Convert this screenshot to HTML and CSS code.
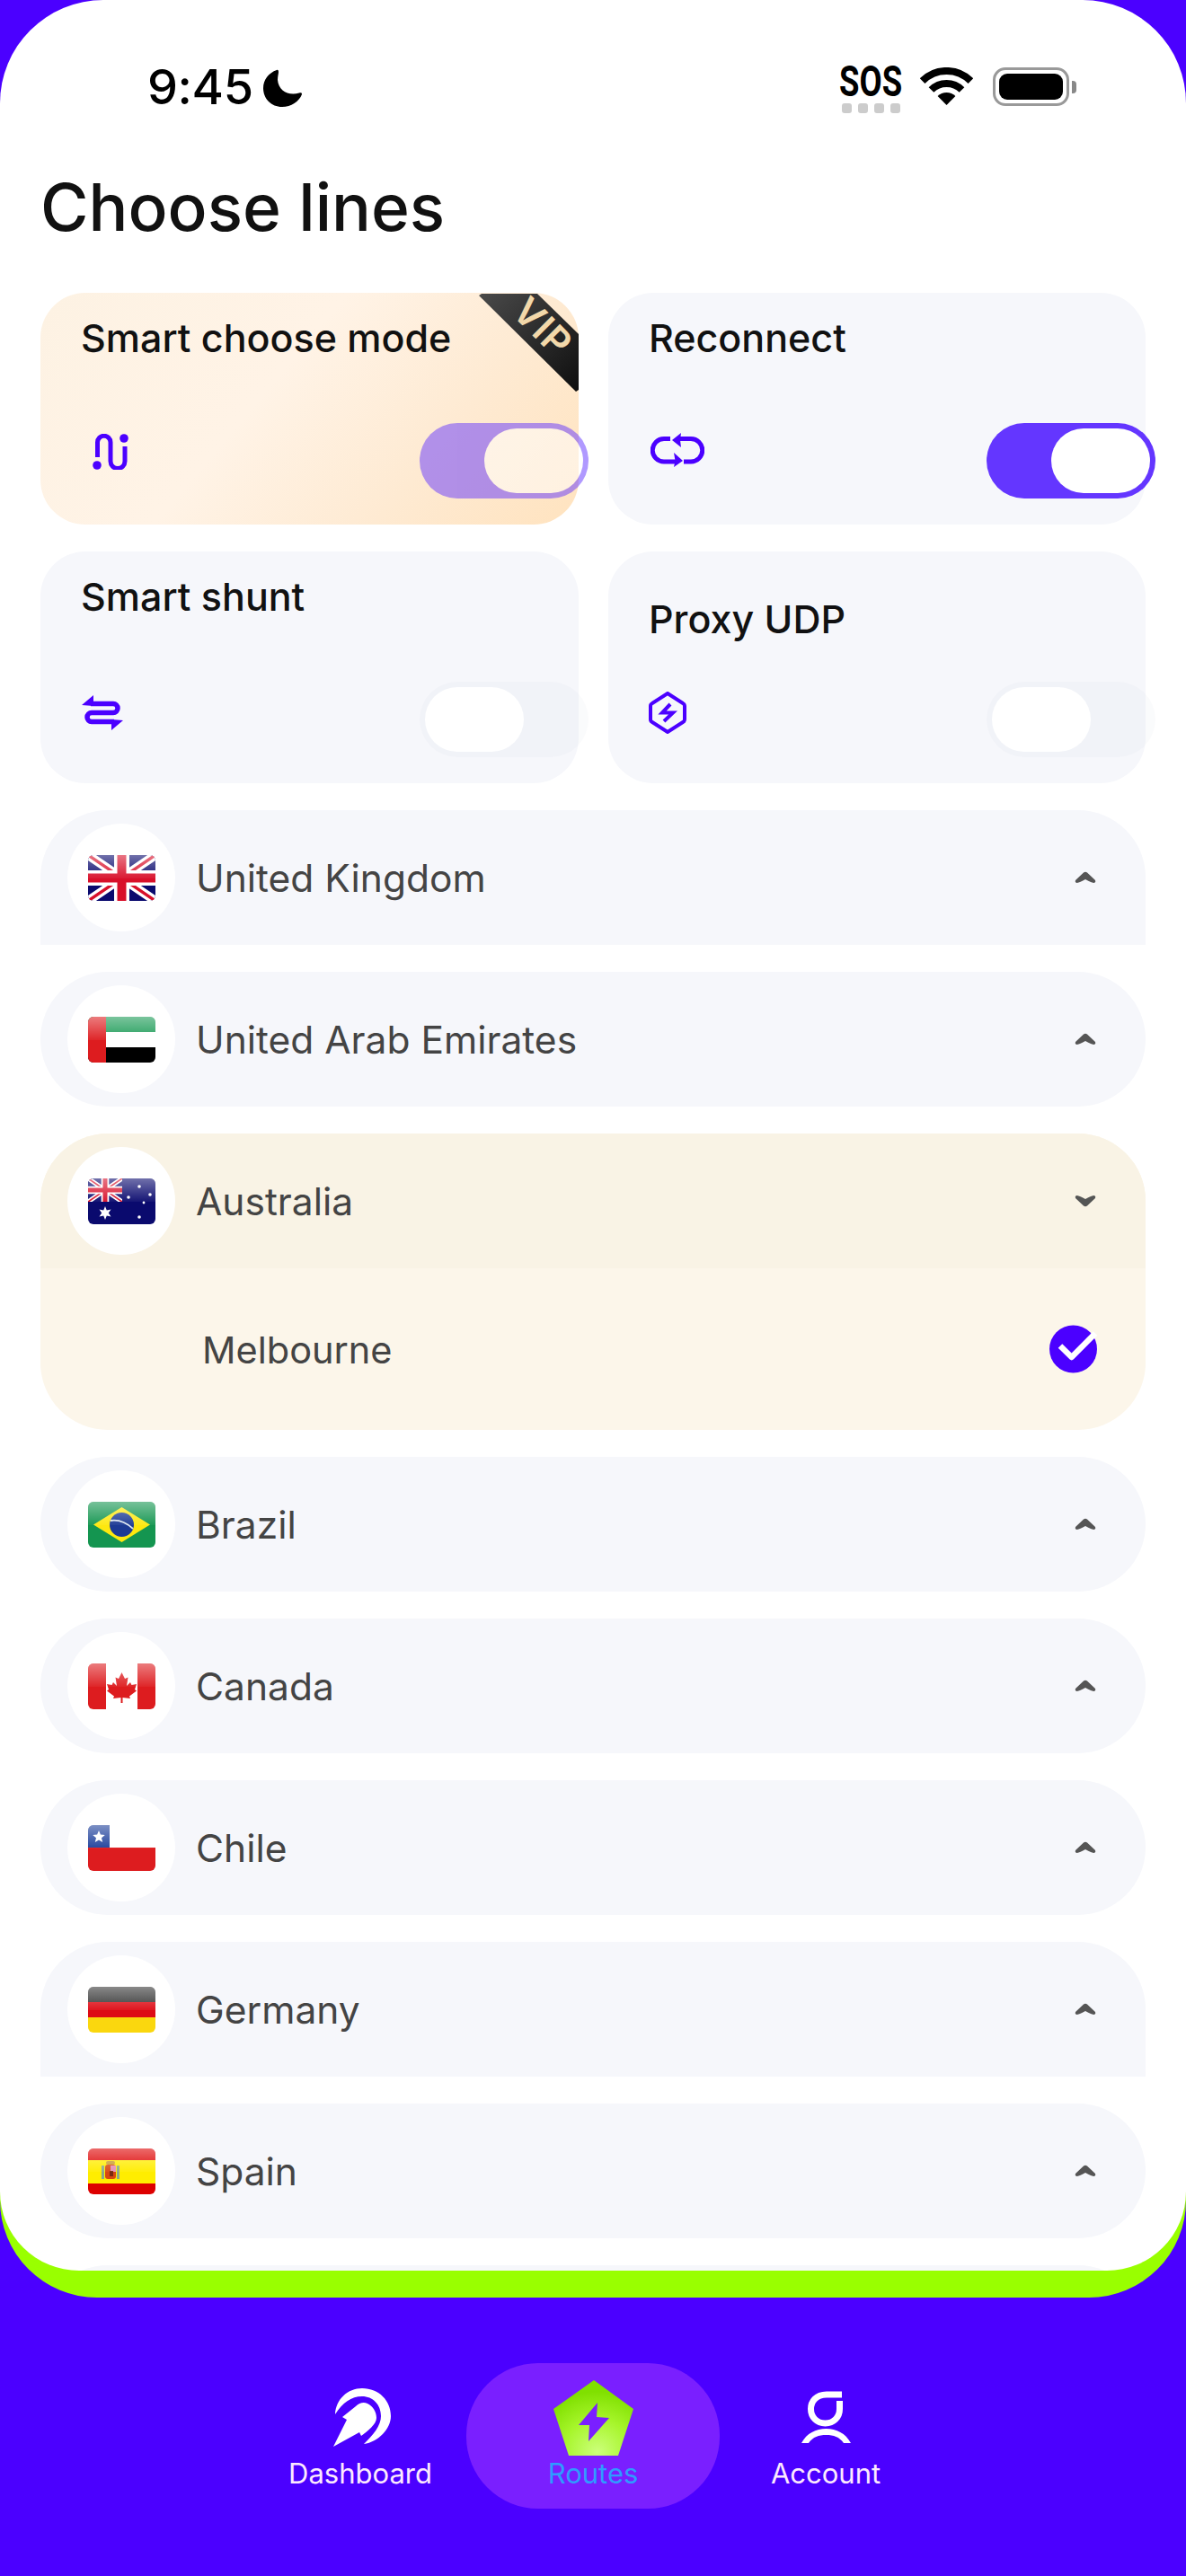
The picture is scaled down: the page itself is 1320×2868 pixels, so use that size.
FILE: index.html
```html
<!DOCTYPE html>
<html lang="en">
<head>
  <meta charset="UTF-8">
  <title>Choose lines</title>
  <link rel="stylesheet" href="styles.css">
</head>
<body>

<svg class="defs" width="0" height="0">
  <symbol id="uk" viewBox="0 0 75 51" preserveAspectRatio="none">
    <rect width="75" height="51" fill="#0a0a6e"/>
    <path d="M0 0L75 51M75 0L0 51" stroke="#fff" stroke-width="10"/>
    <path d="M0 0L75 51M75 0L0 51" stroke="#d8102a" stroke-width="3.5"/>
    <path d="M37.5 0V51M0 25.5H75" stroke="#fff" stroke-width="17"/>
    <path d="M37.5 0V51M0 25.5H75" stroke="#d8102a" stroke-width="10"/>
  </symbol>
  <symbol id="chev" viewBox="0 0 24 14">
    <path d="M2 1Q5 1 12 5Q19 1 22 1Q24 2 23 4L14 12.5Q12 14 10 12.5L1 4Q0 2 2 1Z"/>
  </symbol>
</svg>

<div class="sheet-back">
<div class="sheet">
  <div class="status">
    <span class="time">9:45</span>
    <svg class="moon" width="43" height="42" viewBox="0 0 43 42"><path d="M15 1C6 4 0 12 0 21C0 33 9 42 21 42C31 42 40 36 43 28C43 26 42 26 40 26.5C28 30 17 24 16 12C16 8 17 5 17 3C17 1 16 .5 15 1Z"/></svg>
    <div class="status-right">
      <div class="sos">
        <span class="sos-text">SOS</span>
        <div class="sos-dots"><i></i><i></i><i></i><i></i></div>
      </div>
      <svg class="wifi" width="59" height="42" viewBox="0 0 59 42">
        <path d="M2.6 15.1A38 38 0 0 1 56.4 15.1" fill="none" stroke="#000" stroke-width="8"/>
        <path d="M12.5 25A24 24 0 0 1 46.5 25" fill="none" stroke="#000" stroke-width="8"/>
        <path d="M29.5 42L19.6 32.1A14 14 0 0 1 39.4 32.1Z"/>
      </svg>
      <div class="battery"><div class="battery-body"><div class="battery-fill"></div></div><div class="battery-tip"></div></div>
    </div>
  </div>

  <h1 class="page-title">Choose lines</h1>

  <div class="cards">
    <div class="card card-vip">
      <div class="ribbon"><span>VIP</span></div>
      <div class="card-title">Smart choose mode</div>
      <div class="card-foot">
        <svg class="ico ico-route" width="40" height="40" viewBox="0 0 40 40">
          <path d="M5.5 26V9.5A7.25 7.25 0 0 1 20 9.5V30.5A8 8 0 0 0 36 30.5V14" fill="none" stroke="#4b00ff" stroke-width="5"/>
          <circle cx="5" cy="35" r="4.8" fill="#4b00ff"/><circle cx="35" cy="5" r="4.8" fill="#4b00ff"/>
        </svg>
        <div class="toggle on faded"><i></i></div>
      </div>
    </div>
    <div class="card">
      <div class="card-title">Reconnect</div>
      <div class="card-foot">
        <svg class="ico ico-loop" width="60" height="38" viewBox="0 0 60 38">
          <path d="M22 6.5H15A12.75 12.75 0 0 0 15 32H28M31 6.5H45A12.75 12.75 0 0 1 45 32H37" fill="none" stroke="#4b00ff" stroke-width="5"/>
          <path d="M24 8L34 0L33 8L34 16Z M36 31L26 22L27.5 31L26 38Z" fill="#4b00ff"/>
        </svg>
        <div class="toggle on"><i></i></div>
      </div>
    </div>
    <div class="card">
      <div class="card-title">Smart shunt</div>
      <div class="card-foot">
        <svg class="ico ico-shunt" width="46" height="39" viewBox="0 0 46 39">
          <path d="M10 9.5H35A5 5 0 0 1 35 19.5H11A5 5 0 0 0 11 29.5H36" fill="none" stroke="#4b00ff" stroke-width="5.5"/>
          <path d="M0 11L13 0V12ZM46 28L33 39V27Z" fill="#4b00ff"/>
        </svg>
        <div class="toggle"><i></i></div>
      </div>
    </div>
    <div class="card">
      <div class="card-title title-low">Proxy UDP</div>
      <div class="card-foot">
        <svg class="ico ico-udp" width="42" height="47" viewBox="0 0 42 47">
          <path d="M21 2L38 13Q40 14 40 16V31Q40 33 38 34L21 45L4 34Q2 33 2 31V16Q2 14 4 13Z" fill="none" stroke="#4b00ff" stroke-width="4"/>
          <path d="M24 14L15 23.5H27L17 33" fill="none" stroke="#4b00ff" stroke-width="4"/>
        </svg>
        <div class="toggle"><i></i></div>
      </div>
    </div>
  </div>

  <div class="lines">
    <div class="row flat">
      <div class="flag-wrap"><div class="flag"><svg width="75" height="51"><use href="#uk"/></svg></div></div>
      <span class="name">United Kingdom</span>
      <svg class="chev up"><use href="#chev"/></svg>
    </div>

    <div class="row">
      <div class="flag-wrap"><div class="flag"><svg width="75" height="51" viewBox="0 0 75 51">
        <rect width="75" height="17" fill="#1a9a55"/><rect y="17" width="75" height="17" fill="#fff"/><rect y="34" width="75" height="17" fill="#000"/><rect width="20" height="51" fill="#dd1c1f"/>
      </svg></div></div>
      <span class="name">United Arab Emirates</span>
      <svg class="chev up"><use href="#chev"/></svg>
    </div>

    <div class="group">
      <div class="row open">
        <div class="flag-wrap"><div class="flag"><svg width="75" height="51" viewBox="0 0 75 51">
          <rect width="75" height="51" fill="#0a0a6e"/>
          <svg width="38" height="26" viewBox="0 0 75 51" preserveAspectRatio="none"><use href="#uk"/></svg>
          <polygon points="19,31 20.8,35.6 25.5,34.5 22.8,38.5 25.5,42.5 20.8,41.4 19,46 17.2,41.4 12.5,42.5 15.2,38.5 12.5,34.5 17.2,35.6" fill="#fff"/>
          <g fill="#fff"><circle cx="57" cy="9" r="1.8"/><circle cx="45" cy="21" r="1.8"/><circle cx="69" cy="18" r="1.8"/><circle cx="62" cy="27" r="1.4"/><circle cx="57" cy="43" r="1.8"/></g>
        </svg></div></div>
        <span class="name">Australia</span>
        <svg class="chev"><use href="#chev"/></svg>
      </div>
      <div class="sub-row">
        <span class="name sub-name">Melbourne</span>
        <svg class="check" width="56" height="54" viewBox="0 0 56 54">
          <circle cx="26.5" cy="27" r="26.5" fill="#4b00ff"/>
          <path d="M12 23.5L24.7 36L51 9.5" fill="none" stroke="#fff" stroke-width="6.5" stroke-linejoin="round"/>
        </svg>
      </div>
    </div>

    <div class="row">
      <div class="flag-wrap"><div class="flag"><svg width="75" height="51" viewBox="0 0 75 51">
        <rect width="75" height="51" fill="#149550"/>
        <polygon points="37.5,6 69,25.5 37.5,45 6,25.5" fill="#fde80f"/>
        <circle cx="37.5" cy="25.5" r="13.5" fill="#1c3a94"/>
        <path d="M25 21Q38 19 50 30" fill="none" stroke="#dfe8f0" stroke-width="1.8"/>
      </svg></div></div>
      <span class="name">Brazil</span>
      <svg class="chev up"><use href="#chev"/></svg>
    </div>

    <div class="row">
      <div class="flag-wrap"><div class="flag"><svg width="75" height="51" viewBox="0 0 75 51">
        <rect width="75" height="51" fill="#fff"/><rect width="20" height="51" fill="#dd1c1f"/><rect x="55" width="20" height="51" fill="#dd1c1f"/>
        <polygon points="37.5,10 41,17 44.5,15.5 43,25 47,21 48.5,24 54,23 52,29 54,30.5 46,36.5 47,39 38.5,38 38.5,44 36.5,44 36.5,38 28,39 29,36.5 21,30.5 23,29 21,23 26.5,24 28,21 32,25 30.5,15.5 34,17" fill="#dd1c1f"/>
      </svg></div></div>
      <span class="name">Canada</span>
      <svg class="chev up"><use href="#chev"/></svg>
    </div>

    <div class="row">
      <div class="flag-wrap"><div class="flag"><svg width="75" height="51" viewBox="0 0 75 51">
        <rect width="75" height="25" fill="#fff"/><rect y="25" width="75" height="26" fill="#dd1c1f"/><rect width="24" height="25" fill="#1d3f9a"/>
        <polygon points="12,6 13.9,10.6 18.8,11 15,14.2 16.2,19 12,16.4 7.8,19 9,14.2 5.2,11 10.1,10.6" fill="#fff"/>
      </svg></div></div>
      <span class="name">Chile</span>
      <svg class="chev up"><use href="#chev"/></svg>
    </div>

    <div class="row flat">
      <div class="flag-wrap"><div class="flag"><svg width="75" height="51" viewBox="0 0 75 51">
        <rect width="75" height="17" fill="#333"/><rect y="17" width="75" height="17" fill="#dd0b15"/><rect y="34" width="75" height="17" fill="#fad70e"/>
      </svg></div></div>
      <span class="name">Germany</span>
      <svg class="chev up"><use href="#chev"/></svg>
    </div>

    <div class="row">
      <div class="flag-wrap"><div class="flag"><svg width="75" height="51" viewBox="0 0 75 51">
        <rect width="75" height="51" fill="#dd0000"/><rect y="13" width="75" height="26" fill="#ffed00"/>
        <rect x="15" y="19" width="3" height="15" fill="#8aa88a"/><rect x="32" y="19" width="3" height="15" fill="#8aa88a"/>
        <rect x="19" y="18" width="12" height="16" rx="3" fill="#d9480f"/><rect x="25" y="19" width="6" height="7" fill="#e58fb5"/>
        <rect x="24" y="25" width="4" height="6" fill="#7a2a10"/><rect x="20" y="14" width="10" height="4" rx="2" fill="#c99a2e"/>
      </svg></div></div>
      <span class="name">Spain</span>
      <svg class="chev up"><use href="#chev"/></svg>
    </div>

    <div class="row"></div>
  </div>
</div>
</div>

<div class="nav">
  <div class="nav-item">
    <div class="nav-ico">
      <svg class="ico-dash" width="65" height="65" viewBox="0 0 65 65" fill="#fff">
        <path d="M2 29C3 12 16 0 32 0C51 0 64 14 64 31C64 45 50 60 34 62C44 52 53 42 53 31C53 18 44 9 32 9C20 9 10 16 2 29Z"/>
        <path d="M0 65L15 35L10 32L25 20C29 16 34 15 38 17C44 20 48 26 48 33C48 40 38 48 31 53L29 49Z"/>
      </svg>
    </div>
    <span class="nav-label">Dashboard</span>
  </div>
  <div class="nav-item active">
    <div class="nav-ico">
      <svg class="ico-routes" width="89" height="84" viewBox="0 0 89 84">
        <defs>
          <radialGradient id="penta" cx=".55" cy=".95" r=".8">
            <stop offset="0" stop-color="#ccff7a"/><stop offset=".55" stop-color="#a6f52a"/><stop offset="1" stop-color="#80e000"/>
          </radialGradient>
        </defs>
        <polygon points="45,0 89,32 72,84 17,84 0,32" fill="url(#penta)"/>
        <polygon points="49,25 28,50 40,50 39,68 62,42 48,41" fill="#7a1fff"/>
      </svg>
    </div>
    <span class="nav-label">Routes</span>
  </div>
  <div class="nav-item">
    <div class="nav-ico">
      <svg class="ico-acct" width="55" height="58" viewBox="0 0 55 58">
        <path d="M45 4H28C16 4 10.5 12 10.5 20C10.5 29 17 36 26.5 36C36 36 42.5 29 42.5 20V11" fill="none" stroke="#fff" stroke-width="7"/>
        <path d="M0 58C6 47 16 42 27.5 42C39 42 49 47 55 58H47C42 51 36 49 27.5 49C19 49 13 51 8 58Z" fill="#fff"/>
      </svg>
    </div>
    <span class="nav-label">Account</span>
  </div>
</div>

</body>
</html>
```

FILE: styles.css
```css
* {
  box-sizing: border-box;
}

body {
  margin: 0;
  width: 1320px;
  height: 2868px;
  overflow: hidden;
  background: #4b00ff;
  font-family: Inter, "Liberation Sans", sans-serif;
}

.defs {
  display: block;
  height: 0;
}

/* lime edge under the sheet, only the lower part so it can't fringe the top corners */
.sheet-back {
  padding-bottom: 30px;
  background: linear-gradient(transparent 2300px, #99ff00 2300px);
  border-radius: 0 0 108px 108px;
}

.sheet {
  height: 2528px;
  background: #fff;
  border-radius: 115px 115px 88px 88px;
  overflow: hidden;
}

/* status bar */
.status {
  display: flex;
  align-items: flex-start;
  height: 189px;
  padding: 66px 122px 0 164px;
}

.time {
  font-size: 54px;
  font-weight: 500;
  line-height: 62px;
  letter-spacing: -.4px;
  color: #000;
}

.moon {
  margin: 11px 0 0 11px;
}

.status-right {
  display: flex;
  align-items: flex-start;
  margin: 8px 0 0 auto;
}

.sos {
  display: flex;
  flex-direction: column;
  align-items: center;
  width: 70px;
}

.sos-text {
  font-family: Roboto, sans-serif;
  font-weight: 700;
  font-size: 48px;
  line-height: 34px;
  color: #000;
  transform: scaleX(.76);
}

.sos-dots {
  display: flex;
  gap: 7px;
  margin-top: 7px;
}

.sos-dots i {
  width: 11px;
  height: 11px;
  border-radius: 3px;
  background: #ccc;
}

.wifi {
  margin: 1px 0 0 20px;
}

.battery {
  display: flex;
  align-items: center;
  margin: 1px 0 0 22px;
}

.battery-body {
  width: 85px;
  height: 43px;
  padding: 4px;
  border: 3px solid #999;
  border-radius: 14px;
}

.battery-fill {
  height: 100%;
  background: #000;
  border-radius: 9px;
}

.battery-tip {
  width: 5px;
  height: 14px;
  margin-left: 3px;
  background: #888;
  border-radius: 0 4px 4px 0;
}

.page-title {
  margin: 0 0 53px 45px;
  font-size: 73px;
  font-weight: 500;
  line-height: 84px;
  color: #111;
}

/* option cards */
.cards {
  display: grid;
  grid-template-columns: 599px 598px;
  gap: 30px 33px;
  padding: 0 45px;
}

.card {
  position: relative;
  display: flex;
  flex-direction: column;
  justify-content: space-between;
  height: 258px;
  padding: 25px 0 29px 45px;
  background: #f6f7fb;
  border-radius: 50px;
}

.card-vip {
  background: linear-gradient(130deg, #fdf2e3 0%, #fff3e6 42%, #feead2 72%, #ffe3bf 100%);
}

.card-title {
  font-size: 43px;
  font-weight: 500;
  line-height: 50px;
  color: #111;
}

.title-low {
  margin-top: 25px;
}

.card-foot {
  display: flex;
  align-items: center;
  justify-content: space-between;
}

.ico-route {
  margin: 0 0 20px 13px;
}

.ico-loop {
  margin: 0 0 24px 2px;
}

.ico-shunt {
  margin: 0 0 15px 1px;
}

.ico-udp {
  margin: 0 0 15px 0;
}

.toggle {
  display: flex;
  width: 188px;
  height: 84px;
  margin-right: -11px;
  padding: 6px;
  background: rgba(20, 30, 80, .02);
  border-radius: 42px;
}

.toggle i {
  width: 110px;
  height: 72px;
  background: #fff;
  border-radius: 36px;
}

.toggle.on {
  justify-content: flex-end;
  background: #6436ff;
}

.toggle.faded {
  opacity: .5;
}

.ribbon {
  position: absolute;
  top: 0;
  right: 0;
  width: 111px;
  height: 112px;
  background: linear-gradient(135deg, #4a4a4a, #0e0e0e);
  clip-path: polygon(0 3px, 3px 1px, 65px 1px, 111px 46px, 111px 108px, 108px 110px);
}

.ribbon span {
  position: absolute;
  top: 15px;
  left: 35px;
  font-size: 42px;
  font-weight: 600;
  line-height: 46px;
  letter-spacing: 1px;
  color: #f2d8aa;
  transform: rotate(45deg);
}

/* country list */
.lines {
  display: flex;
  flex-direction: column;
  gap: 30px;
  padding: 30px 45px 0;
}

.row {
  display: flex;
  align-items: center;
  flex: none;
  gap: 23px;
  height: 150px;
  padding: 0 55px 0 30px;
  background: #f6f7fb;
  border-radius: 75px;
}

.row.flat {
  border-radius: 75px 75px 0 0;
}

.row.open {
  background: #f9f3e5;
  border-radius: 0;
}

.group {
  background: #fcf6ea;
  border-radius: 75px;
  overflow: hidden;
}

.sub-row {
  display: flex;
  align-items: center;
  height: 180px;
  padding: 0 51px 0 180px;
}

.flag-wrap {
  display: flex;
  align-items: center;
  justify-content: center;
  width: 120px;
  height: 120px;
  background: #fff;
  border-radius: 50%;
}

.flag {
  position: relative;
  width: 75px;
  height: 51px;
  border-radius: 6px;
  overflow: hidden;
}

.flag svg {
  display: block;
}

.flag::after {
  content: "";
  position: absolute;
  inset: 0;
  background: linear-gradient(rgba(255, 255, 255, .42), rgba(255, 255, 255, .05) 50%, transparent 52%);
}

.name {
  margin-top: 2px;
  font-size: 42.5px;
  line-height: 50px;
  color: #444;
}

.sub-name {
  font-size: 41.5px;
}

.chev {
  width: 24px;
  height: 14px;
  margin-left: auto;
  fill: #555;
}

.chev.up {
  transform: rotate(180deg);
}

.check {
  margin-left: auto;
}

/* bottom nav */
.nav {
  display: flex;
  justify-content: center;
  margin-top: 73px;
}

.nav-item {
  display: flex;
  flex-direction: column;
  align-items: center;
  width: 236px;
  height: 162px;
}

.nav-item.active {
  width: 282px;
  background: #7a1fff;
  border-radius: 80px;
}

.nav-ico {
  display: flex;
  align-items: flex-end;
  height: 104px;
}

.ico-dash {
  margin: 0 0 11px 4px;
}

.ico-routes {
  margin-bottom: 1px;
}

.ico-acct {
  margin-bottom: 15px;
}

.nav-label {
  font-size: 31px;
  line-height: 38px;
  color: #fde9ff;
}

.active .nav-label {
  color: #2f9bff;
}
```
